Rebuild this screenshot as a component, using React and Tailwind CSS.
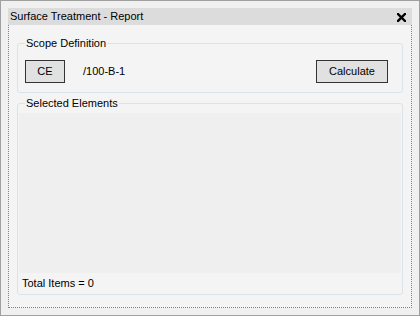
import React from "react";

export default function App() {
  return (
    <div
      className="w-[420px] h-[316px] border border-[#a0a0a0] bg-[#f0f0f0] px-[7px] pt-[7px] pb-[7px] flex flex-col text-[11px] text-black"
      style={{ fontFamily: '"Liberation Sans", Arial, sans-serif' }}
    >
      <div className="h-[17px] bg-[#dcdcdc] flex items-center justify-between pl-[2px] pr-[6px] shrink-0">
        <span className="leading-none">Surface Treatment - Report</span>
        <svg width="9" height="9" viewBox="0 0 9 9" className="mt-[1px]">
          <path d="M1 1 L8 8 M8 1 L1 8" stroke="#000" strokeWidth="2.4" strokeLinecap="square" />
        </svg>
      </div>
      <div className="flex-1 border-x border-b border-dotted border-[#808080] bg-[#f4f4f4] px-[8px] pt-[11px] pb-[12px] flex flex-col gap-[3px]">
        <fieldset className="border border-[#dce3e8] rounded-[3px] h-[57px] pl-[7px] pr-[14px]">
          <legend className="px-[1px] leading-[14px]">Scope Definition</legend>
          <div className="flex items-center mt-[10px]">
            <button className="w-[40px] h-[23px] border border-[#333] bg-[#e1e1e1] flex items-center justify-center">
              CE
            </button>
            <span className="ml-[18px]">/100-B-1</span>
            <button className="ml-auto w-[72px] h-[23px] border border-[#333] bg-[#e1e1e1] flex items-center justify-center">
              Calculate
            </button>
          </div>
        </fieldset>
        <fieldset className="flex-1 border border-[#dce3e8] rounded-[3px] px-[1px] pb-[1px] flex flex-col">
          <legend className="ml-[6px] px-[1px] leading-[14px]">Selected Elements</legend>
          <div className="flex-1 bg-[#efefef] mt-[3px]" />
          <div className="h-[20px] flex items-center pl-[3px]">Total Items = 0</div>
        </fieldset>
      </div>
    </div>
  );
}
